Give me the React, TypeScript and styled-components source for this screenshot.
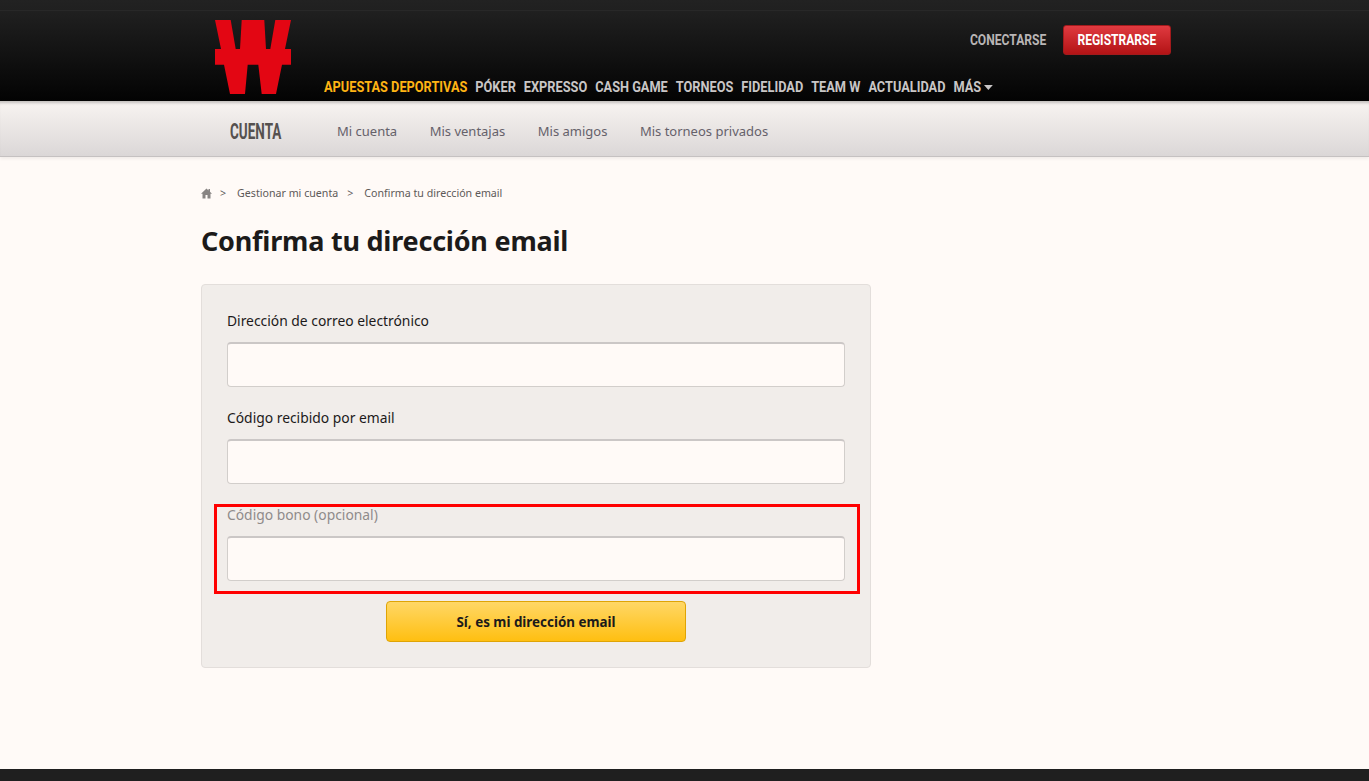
import React from 'react';
import styled, { createGlobalStyle } from 'styled-components';

const GlobalStyle = createGlobalStyle`
	html, body {
		margin: 0;
		padding: 0;
		height: 100%;
		background: #fffaf7;
		font-family: 'Noto Sans', 'Open Sans', sans-serif;
	}
	* {
		box-sizing: border-box;
	}
`;

const Page = styled.div`
	height: 781px;
	display: flex;
	flex-direction: column;
	overflow: hidden;
	position: relative;
`;

const TopBar = styled.header`
	height: 101px;
	flex: none;
	background: linear-gradient(#222222 0, #202020 10px, #303030 10px, #202020 11px, #030303 100%);
	position: relative;
	z-index: 2;
`;

const TopInner = styled.div`
	width: 970px;
	height: 100%;
	margin-left: 201px;
	display: flex;
`;

const Logo = styled.svg`
	width: 76px;
	height: 74px;
	margin: 20px 0 0 14px;
	flex: none;
`;

const TopRight = styled.div`
	flex: 1;
	display: flex;
	flex-direction: column;
	justify-content: space-between;
	padding: 25px 0 3px 33px;
`;

const AccountRow = styled.div`
	display: flex;
	justify-content: flex-end;
	align-items: center;
`;

const LoginLink = styled.a`
	font-family: 'Roboto', sans-serif;
	font-size: 14px;
	font-weight: 700;
	color: #b9b5b5;
	margin-right: 17px;
	transform: scaleX(0.865);
	transform-origin: right center;
`;

const RegisterButton = styled.a`
	width: 108px;
	height: 30px;
	display: flex;
	align-items: center;
	justify-content: center;
	border-radius: 3px;
	font-family: 'Roboto', sans-serif;
	font-size: 14px;
	font-weight: 700;
	color: #fff;
	background: linear-gradient(#e03a40, #b31315);
	border: 1px solid #a31a1c;
`;

const RegisterLabel = styled.span`
	display: block;
	transform: scaleX(0.86);
`;

const MainNav = styled.nav`
	display: flex;
	align-items: center;
	gap: 9.1px;
	height: 22px;
	transform: scaleX(0.88);
	transform-origin: left center;
`;

const MainNavItem = styled.a<{ $active?: boolean }>`
	font-family: 'Roboto', sans-serif;
	font-size: 14.5px;
	font-weight: 700;
	white-space: nowrap;
	color: ${(p) => (p.$active ? '#ffb414' : '#c9c6c6')};
`;

const Caret = styled.span`
	display: inline-block;
	width: 0;
	height: 0;
	margin-left: 3px;
	vertical-align: 2px;
	border-left: 5.5px solid transparent;
	border-right: 5.5px solid transparent;
	border-top: 5px solid #c9c6c6;
`;

const SubBar = styled.div`
	height: 56px;
	flex: none;
	background: linear-gradient(#f8f4f1, #dbd7d7);
	border-bottom: 1px solid #c5c1c1;
	box-shadow: inset 0 4px 3px -2px rgba(0, 0, 0, 0.22), 0 2px 3px rgba(0, 0, 0, 0.06);
	display: flex;
	align-items: center;
	padding: 4px 0 0 230px;
`;

const SubTitle = styled.div`
	width: 107px;
	font-family: 'Roboto', sans-serif;
	font-size: 22.5px;
	font-weight: 700;
	color: #55514f;
	transform: scaleX(0.6);
	transform-origin: left center;
`;

const SubNav = styled.nav`
	display: flex;
	gap: 32.5px;
`;

const SubNavItem = styled.a`
	font-size: 13px;
	color: #65616a;
	white-space: nowrap;
`;

const Content = styled.main`
	flex: 1;
	padding: 29px 0 0 201px;
`;

const Breadcrumb = styled.div`
	display: flex;
	align-items: center;
	height: 14px;
	font-size: 10.65px;
	color: #5d5958;
`;

const HomeIcon = styled.svg`
	width: 11px;
	height: 11px;
	fill: #888483;
`;

const CrumbSep = styled.span<{ $first?: boolean }>`
	margin: 0 11px 0 ${(p) => (p.$first ? 8 : 9)}px;
`;

const Title = styled.h1`
	margin: 23px 0 25px;
	height: 36px;
	line-height: 36px;
	font-size: 27px;
	font-weight: 700;
	letter-spacing: -0.22px;
	color: #1c1a1a;
`;

const Panel = styled.form`
	width: 670px;
	height: 384px;
	padding: 26px 25px 0;
	background: #f1edea;
	border: 1px solid #e3dedb;
	border-radius: 4px;
`;

const Field = styled.div`
	margin-bottom: 21px;
`;

const Label = styled.label<{ $muted?: boolean }>`
	display: block;
	height: 20px;
	line-height: 20px;
	margin-bottom: 11px;
	font-size: 13.85px;
	color: ${(p) => (p.$muted ? '#8f8b8b' : '#1c1a1a')};
`;

const Input = styled.input`
	display: block;
	width: 618px;
	height: 45px;
	background: #fffaf7;
	border: 1px solid #d2cecb;
	border-top: 2px solid #cbc7c6;
	border-radius: 4px;
	outline: none;
`;

const SubmitButton = styled.button`
	display: block;
	width: 300px;
	height: 41px;
	margin: -1px auto 0;
	background: linear-gradient(#ffd766, #ffbf11);
	border: 1px solid #dfa405;
	border-radius: 4px;
	font-family: inherit;
	font-size: 13.4px;
	font-weight: 700;
	color: #1c1a1a;
`;

const Highlight = styled.div`
	position: absolute;
	left: 214px;
	top: 504px;
	width: 646px;
	height: 90px;
	border: 3px solid #ff0000;
	pointer-events: none;
`;

const Footer = styled.footer`
	height: 12px;
	flex: none;
	background: #1f1f1f;
`;

const navItems = ['PÓKER', 'EXPRESSO', 'CASH GAME', 'TORNEOS', 'FIDELIDAD', 'TEAM W', 'ACTUALIDAD'];
const subItems = ['Mi cuenta', 'Mis ventajas', 'Mis amigos', 'Mis torneos privados'];

const App = () => {
	return (
		<Page>
			<GlobalStyle />
			<TopBar>
				<TopInner>
					<Logo viewBox="0 0 76 74">
						<path
							fill="#e30613"
							d="M0 0H15.7L20.7 29H25L26.7 0H49.3L51 29H55.3L60.3 0H76L70 29H76V44.7H67L61 74H46.7L43.3 44.7H32.7L30 74H15L9 44.7H0V29H6Z"
						/>
					</Logo>
					<TopRight>
						<AccountRow>
							<LoginLink>CONECTARSE</LoginLink>
							<RegisterButton>
								<RegisterLabel>REGISTRARSE</RegisterLabel>
							</RegisterButton>
						</AccountRow>
						<MainNav>
							<MainNavItem $active>APUESTAS DEPORTIVAS</MainNavItem>
							{navItems.map((item) => (
								<MainNavItem key={item}>{item}</MainNavItem>
							))}
							<MainNavItem>
								MÁS
								<Caret />
							</MainNavItem>
						</MainNav>
					</TopRight>
				</TopInner>
			</TopBar>
			<SubBar>
				<SubTitle>CUENTA</SubTitle>
				<SubNav>
					{subItems.map((item) => (
						<SubNavItem key={item}>{item}</SubNavItem>
					))}
				</SubNav>
			</SubBar>
			<Content>
				<Breadcrumb>
					<HomeIcon viewBox="0 0 11 11">
						<path d="M5.5 0.5L7.5 2.4V1H9V3.8L11 5.8H9.5V10.5H6.5V7H4.5V10.5H1.5V5.8H0Z" />
					</HomeIcon>
					<CrumbSep $first>&gt;</CrumbSep>
					Gestionar mi cuenta
					<CrumbSep>&gt;</CrumbSep>
					Confirma tu dirección email
				</Breadcrumb>
				<Title>Confirma tu dirección email</Title>
				<Panel>
					<Field>
						<Label>Dirección de correo electrónico</Label>
						<Input />
					</Field>
					<Field>
						<Label>Código recibido por email</Label>
						<Input />
					</Field>
					<Field>
						<Label $muted>Código bono (opcional)</Label>
						<Input />
					</Field>
					<SubmitButton type="button">Sí, es mi dirección email</SubmitButton>
				</Panel>
			</Content>
			<Footer />
			<Highlight />
		</Page>
	);
};

export default App;
